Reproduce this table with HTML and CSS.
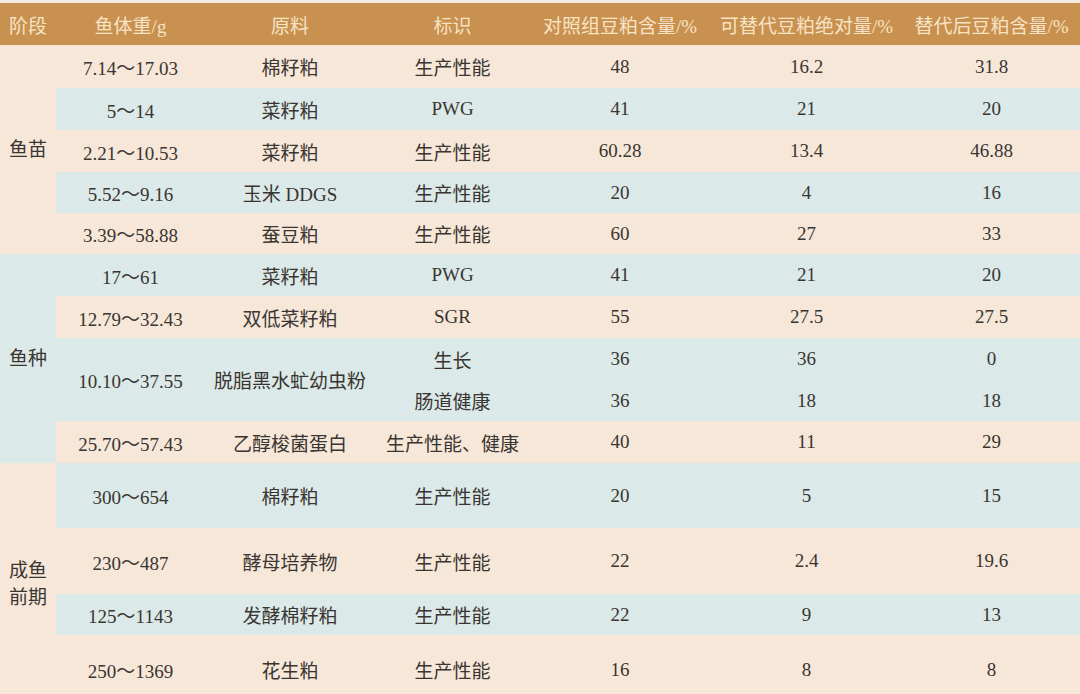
FILE: index.html
```html
<!DOCTYPE html>
<html lang="zh-CN">
<head>
<meta charset="utf-8">
<title>豆粕替代</title>
<link rel="stylesheet" href="styles.css">
</head>
<body>
<div class="page">
<table class="tbl">
  <colgroup>
    <col class="c1"><col class="c2"><col class="c3"><col class="c4"><col class="c5"><col class="c6"><col class="c7">
  </colgroup>
  <thead>
    <tr class="head">
      <th>阶段</th><th>鱼体重/g</th><th>原料</th><th>标识</th><th>对照组豆粕含量/%</th><th>可替代豆粕绝对量/%</th><th>替代后豆粕含量/%</th>
    </tr>
  </thead>
  <tbody>
    <tr class="beige h43">
      <td rowspan="5" class="stage beige">鱼苗</td>
      <td>7.14～17.03</td><td>棉籽粕</td><td>生产性能</td><td>48</td><td>16.2</td><td>31.8</td>
    </tr>
    <tr class="blue h42"><td>5～14</td><td>菜籽粕</td><td>PWG</td><td>41</td><td>21</td><td>20</td></tr>
    <tr class="beige h42"><td>2.21～10.53</td><td>菜籽粕</td><td>生产性能</td><td>60.28</td><td>13.4</td><td>46.88</td></tr>
    <tr class="blue h41"><td>5.52～9.16</td><td>玉米 DDGS</td><td>生产性能</td><td>20</td><td>4</td><td>16</td></tr>
    <tr class="beige h41"><td>3.39～58.88</td><td>蚕豆粕</td><td>生产性能</td><td>60</td><td>27</td><td>33</td></tr>

    <tr class="blue h42">
      <td rowspan="5" class="stage blue">鱼种</td>
      <td>17～61</td><td>菜籽粕</td><td>PWG</td><td>41</td><td>21</td><td>20</td>
    </tr>
    <tr class="beige h42"><td>12.79～32.43</td><td>双低菜籽粕</td><td>SGR</td><td>55</td><td>27.5</td><td>27.5</td></tr>
    <tr class="blue h42"><td rowspan="2">10.10～37.55</td><td rowspan="2">脱脂黑水虻幼虫粉</td><td>生长</td><td>36</td><td>36</td><td>0</td></tr>
    <tr class="blue h41"><td>肠道健康</td><td>36</td><td>18</td><td>18</td></tr>
    <tr class="beige h42"><td>25.70～57.43</td><td>乙醇梭菌蛋白</td><td>生产性能、健康</td><td>40</td><td>11</td><td>29</td></tr>

    <tr class="blue h65">
      <td rowspan="4" class="stage beige"><span class="stage-txt">成鱼<br>前期</span></td>
      <td>300～654</td><td>棉籽粕</td><td>生产性能</td><td>20</td><td>5</td><td>15</td>
    </tr>
    <tr class="beige h66"><td>230～487</td><td>酵母培养物</td><td>生产性能</td><td>22</td><td>2.4</td><td>19.6</td></tr>
    <tr class="blue h41"><td>125～1143</td><td>发酵棉籽粕</td><td>生产性能</td><td>22</td><td>9</td><td>13</td></tr>
    <tr class="beige h59 last"><td>250～1369</td><td>花生粕</td><td>生产性能</td><td>16</td><td>8</td><td>8</td></tr>
  </tbody>
</table>
</div>
</body>
</html>
```

FILE: styles.css
```css
html, body {
  margin: 0;
  padding: 0;
  background: #f7ede2;
}

.page {
  width: 1080px;
  height: 694px;
  overflow: hidden;
  padding-top: 3px;
  box-sizing: border-box;
  background: #f7ede2;
}

.tbl {
  width: 1080px;
  border-collapse: collapse;
  border-spacing: 0;
  table-layout: fixed;
  font-family: "Liberation Serif", "Noto Sans CJK SC", serif;
  font-size: 19px;
  color: #3a3531;
}

.c1 { width: 56px; }
.c2 { width: 149px; }
.c3 { width: 170px; }
.c4 { width: 155px; }
.c5 { width: 180px; }
.c6 { width: 193px; }
.c7 { width: 177px; }

.tbl th,
.tbl td {
  padding: 0;
  text-align: center;
  vertical-align: middle;
  font-weight: normal;
  white-space: nowrap;
}

.head {
  height: 42px;
  background: #c9914f;
}

.head th {
  color: #f7e3c6;
  font-size: 19px;
}

.beige { background: #f6e7d9; }
.blue { background: #dbe9e9; }

.h41 { height: 41px; }
.h42 { height: 42px; }
.h43 { height: 43px; }
.h59 { height: 59px; }
.h65 { height: 65px; }
.h66 { height: 66px; }

.last td { padding-top: 10px; }
.last td.stage { padding-top: 0; }

.stage {
  line-height: 27px;
}

.stage-txt {
  display: inline-block;
  padding-top: 10px;
}
```
